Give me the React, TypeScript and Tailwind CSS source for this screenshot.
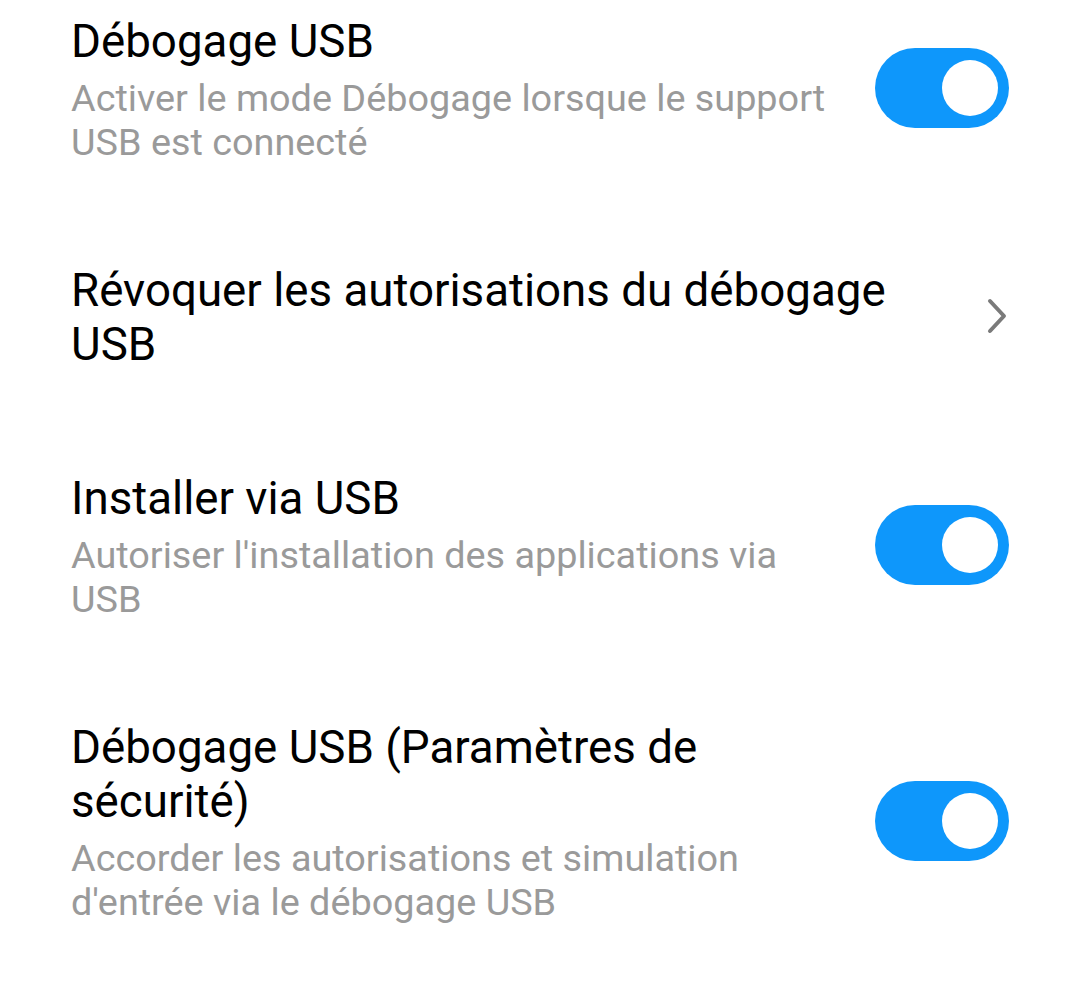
import React from 'react';

interface Setting {
  title: string;
  subtitle?: string;
  kind: 'toggle' | 'link';
}

const settings: Setting[] = [
  {
    title: 'Débogage USB',
    subtitle: 'Activer le mode Débogage lorsque le support USB est connecté',
    kind: 'toggle',
  },
  {
    title: 'Révoquer les autorisations du débogage USB',
    kind: 'link',
  },
  {
    title: 'Installer via USB',
    subtitle: "Autoriser l'installation des applications via USB",
    kind: 'toggle',
  },
  {
    title: 'Débogage USB (Paramètres de sécurité)',
    subtitle: "Accorder les autorisations et simulation d'entrée via le débogage USB",
    kind: 'toggle',
  },
];

function Toggle() {
  return (
    <div className="w-[134px] h-[80px] rounded-full bg-[#0e97fb] flex items-center justify-end pr-[11px] shrink-0 -mt-[4px]">
      <div className="w-[56px] h-[56px] rounded-full bg-white" />
    </div>
  );
}

function Chevron() {
  return (
    <svg width="22" height="38" viewBox="0 0 22 38" className="shrink-0 mr-[1px] -mt-[4px]">
      <path d="M4 4 L18 19 L4 34" fill="none" stroke="#7a7a7a" strokeWidth="4" strokeLinecap="round" strokeLinejoin="round" />
    </svg>
  );
}

export default function App() {
  return (
    <div className="min-h-screen bg-white font-['Roboto',sans-serif] px-[71px] pt-[15px] flex flex-col gap-[100px]">
      {settings.map((s) => (
        <div key={s.title} className="flex items-center justify-between">
          <div className={s.kind === 'toggle' ? 'w-[770px]' : 'w-[860px]'}>
            <div className="text-[45.7px] leading-[54px] text-black">{s.title}</div>
            {s.subtitle && (
              <div className="mt-[7px] text-[37.8px] leading-[44px] text-[#9a9a9a]">{s.subtitle}</div>
            )}
          </div>
          {s.kind === 'toggle' ? <Toggle /> : <Chevron />}
        </div>
      ))}
    </div>
  );
}
